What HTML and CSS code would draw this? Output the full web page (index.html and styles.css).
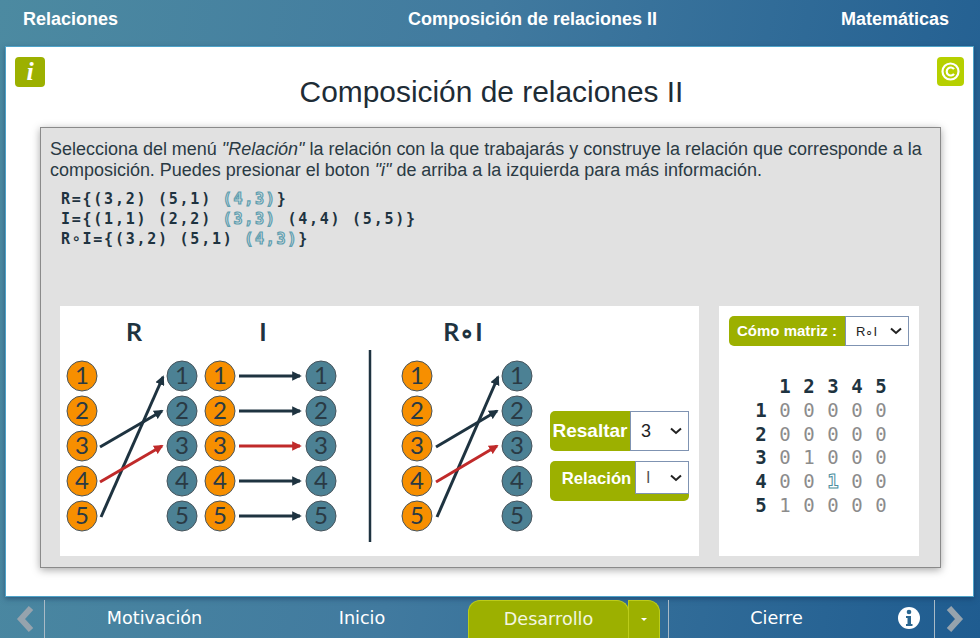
FILE: index.html
```html
<!DOCTYPE html>
<html lang="es">
<head>
    <meta charset="UTF-8">
    <meta name="viewport" content="width=device-width, initial-scale=1.0">
    <title>Composición de relaciones II</title>
    <link rel="stylesheet" href="styles.css">
</head>
<body>
    <header class="top-bar">
        <span class="top-left">Relaciones</span>
        <span>Composición de relaciones II</span>
        <span class="top-right">Matemáticas</span>
    </header>

    <main class="sheet">
        <div class="title-row">
            <button class="icon-btn info-btn">i</button>
            <h1>Composición de relaciones II</h1>
            <button class="icon-btn copy-btn">
                <svg width="21" height="21" viewBox="0 0 21 21">
                    <circle cx="10.5" cy="10.5" r="8" fill="none" stroke="#fff" stroke-width="2.2"/>
                    <path d="M14 8.2a4 4 0 1 0 0 4.6" fill="none" stroke="#fff" stroke-width="2.2"/>
                </svg>
            </button>
        </div>

        <section class="panel">
            <p class="intro">Selecciona del menú <em>"Relación"</em> la relación con la que trabajarás y construye la relación que corresponde a la composición. Puedes presionar el boton <em>"i"</em> de arriba a la izquierda para más información.</p>
            <div class="sets">
                <div>R={(3,2) (5,1) <span class="hl">(4,3)</span>}</div>
                <div>I={(1,1) (2,2) <span class="hl">(3,3)</span> (4,4) (5,5)}</div>
                <div>R∘I={(3,2) (5,1) <span class="hl">(4,3)</span>}</div>
            </div>

            <div class="work">
                <div class="diagram">
                    <svg class="graph" width="490" height="250" viewBox="0 0 490 250">
                        <defs>
                            <marker id="headDark" markerWidth="3.2" markerHeight="3.2" refX="2.6" refY="1.6" orient="auto"><path d="M0 0L3.200 1.600L0 3.200Z" fill="#1e3340"/></marker>
                            <marker id="headRed" markerWidth="3.2" markerHeight="3.2" refX="2.6" refY="1.6" orient="auto"><path d="M0 0L3.200 1.600L0 3.200Z" fill="#c02a2a"/></marker>
                        </defs>
                        <g class="heads">
                            <text x="74" y="35">R</text>
                            <text x="203" y="35">I</text>
                            <text x="403" y="35">R∘I</text>
                        </g>
                        <line class="sep" x1="310" y1="44" x2="310" y2="236"/>

                        <g class="arrow">
                            <line x1="40" y1="141" x2="102" y2="105"/>
                            <line x1="41" y1="211" x2="103" y2="71"/>
                            <line class="red" x1="40" y1="176" x2="102" y2="140"/>
                            <line x1="179" y1="70" x2="240" y2="70"/>
                            <line x1="179" y1="105" x2="240" y2="105"/>
                            <line class="red" x1="179" y1="140" x2="240" y2="140"/>
                            <line x1="179" y1="175" x2="240" y2="175"/>
                            <line x1="179" y1="210" x2="240" y2="210"/>
                            <line x1="376" y1="141" x2="437" y2="105"/>
                            <line x1="377" y1="211" x2="438" y2="71"/>
                            <line class="red" x1="376" y1="176" x2="437" y2="140"/>
                        </g>

                        <g class="node dom">
                            <circle cx="22" cy="70" r="15"/><text x="22" y="78">1</text>
                            <circle cx="22" cy="105" r="15"/><text x="22" y="113">2</text>
                            <circle cx="22" cy="140" r="15"/><text x="22" y="148">3</text>
                            <circle cx="22" cy="175" r="15"/><text x="22" y="183">4</text>
                            <circle cx="22" cy="210" r="15"/><text x="22" y="218">5</text>
                            <circle cx="160" cy="70" r="15"/><text x="160" y="78">1</text>
                            <circle cx="160" cy="105" r="15"/><text x="160" y="113">2</text>
                            <circle cx="160" cy="140" r="15"/><text x="160" y="148">3</text>
                            <circle cx="160" cy="175" r="15"/><text x="160" y="183">4</text>
                            <circle cx="160" cy="210" r="15"/><text x="160" y="218">5</text>
                            <circle cx="357" cy="70" r="15"/><text x="357" y="78">1</text>
                            <circle cx="357" cy="105" r="15"/><text x="357" y="113">2</text>
                            <circle cx="357" cy="140" r="15"/><text x="357" y="148">3</text>
                            <circle cx="357" cy="175" r="15"/><text x="357" y="183">4</text>
                            <circle cx="357" cy="210" r="15"/><text x="357" y="218">5</text>
                        </g>
                        <g class="node cod">
                            <circle cx="122" cy="70" r="15"/><text x="122" y="78">1</text>
                            <circle cx="122" cy="105" r="15"/><text x="122" y="113">2</text>
                            <circle cx="122" cy="140" r="15"/><text x="122" y="148">3</text>
                            <circle cx="122" cy="175" r="15"/><text x="122" y="183">4</text>
                            <circle cx="122" cy="210" r="15"/><text x="122" y="218">5</text>
                            <circle cx="261" cy="70" r="15"/><text x="261" y="78">1</text>
                            <circle cx="261" cy="105" r="15"/><text x="261" y="113">2</text>
                            <circle cx="261" cy="140" r="15"/><text x="261" y="148">3</text>
                            <circle cx="261" cy="175" r="15"/><text x="261" y="183">4</text>
                            <circle cx="261" cy="210" r="15"/><text x="261" y="218">5</text>
                            <circle cx="457" cy="70" r="15"/><text x="457" y="78">1</text>
                            <circle cx="457" cy="105" r="15"/><text x="457" y="113">2</text>
                            <circle cx="457" cy="140" r="15"/><text x="457" y="148">3</text>
                            <circle cx="457" cy="175" r="15"/><text x="457" y="183">4</text>
                            <circle cx="457" cy="210" r="15"/><text x="457" y="218">5</text>
                        </g>
                    </svg>

                    <div class="controls">
                        <label class="ctl ctl-big">
                            <span>Resaltar</span>
                            <select><option>3</option></select>
                        </label>
                        <label class="ctl ctl-rel">
                            <span>Relación</span>
                            <select><option>I</option></select>
                        </label>
                    </div>
                </div>

                <div class="matrix-box">
                    <label class="ctl ctl-matrix">
                        <span>Cómo matriz :</span>
                        <select><option>R∘I</option></select>
                    </label>
                    <div class="matrix">
                        <b></b><b>1</b><b>2</b><b>3</b><b>4</b><b>5</b>
                        <b>1</b><i>0</i><i>0</i><i>0</i><i>0</i><i>0</i>
                        <b>2</b><i>0</i><i>0</i><i>0</i><i>0</i><i>0</i>
                        <b>3</b><i>0</i><i>1</i><i>0</i><i>0</i><i>0</i>
                        <b>4</b><i>0</i><i>0</i><i class="hl">1</i><i>0</i><i>0</i>
                        <b>5</b><i>1</i><i>0</i><i>0</i><i>0</i><i>0</i>
                    </div>
                </div>
            </div>
        </section>
    </main>

    <footer class="bottom-bar">
        <a class="arrow-cell left">
            <svg width="18" height="26" viewBox="0 0 18 26"><path d="M15 2L5 13l10 11" fill="none" stroke="#96a3ad" stroke-width="6"/></svg>
        </a>
        <a class="nav nav-mot">Motivación</a>
        <a class="nav nav-ini">Inicio</a>
        <a class="nav nav-cur">Desarrollo</a>
        <a class="nav-caret"></a>
        <a class="nav nav-cie">Cierre</a>
        <a class="info-cell">
            <svg width="24" height="24" viewBox="0 0 24 24">
                <circle cx="12" cy="12" r="11" fill="#fff"/>
                <circle cx="12" cy="6" r="2.3" fill="#2a6690"/>
                <path d="M9 10h5v8h1.500v2h-6.500v-2h1.500v-6h-1.500z" fill="#2a6690"/>
            </svg>
        </a>
        <a class="arrow-cell right">
            <svg width="18" height="26" viewBox="0 0 18 26"><path d="M3 2l10 11L3 24" fill="none" stroke="#96a3ad" stroke-width="6"/></svg>
        </a>
    </footer>
</body>
</html>
```

FILE: styles.css
```css
* {
    box-sizing: border-box;
}

html, body {
    height: 100%;
}

body {
    margin: 0;
    height: 638px;
    overflow: hidden;
    display: flex;
    flex-direction: column;
    font-family: "Liberation Sans", Arial, sans-serif;
    color: #1e3340;
    background: linear-gradient(100deg, #4c8aa1 0%, #417a9f 45%, #1f5c90 100%);
}

.top-bar {
    height: 46px;
    flex: none;
    display: flex;
    align-items: center;
    padding: 0 31px 7px 23px;
    font-size: 18px;
    font-weight: bold;
    color: #fff;
}

.top-left {
    width: 385px;
}

.top-right {
    margin-left: auto;
}

.sheet {
    height: 551px;
    flex: none;
    margin: 0 6px 0 5px;
    background-color: #fff;
    border: 1px solid #4fa3c9;
    box-shadow: 0 2px 5px rgba(20, 50, 90, 0.5);
    display: flex;
    flex-direction: column;
}

.title-row {
    height: 80px;
    flex: none;
    display: flex;
    justify-content: space-between;
    padding: 10px 9px 0 9px;
    position: relative;
}

h1 {
    margin: 0;
    position: absolute;
    left: 4px;
    right: 0;
    top: 27px;
    text-align: center;
    font-size: 29.900px;
    font-weight: normal;
    line-height: 36px;
    color: #1e2c36;
}

.icon-btn {
    padding: 0;
    border: 0;
    border-radius: 4px;
    display: flex;
    align-items: center;
    justify-content: center;
    color: #fff;
}

.info-btn {
    width: 30px;
    height: 30px;
    background-color: #9cb000;
    font-family: "Liberation Serif", serif;
    font-style: italic;
    font-weight: bold;
    font-size: 26px;
}

.copy-btn {
    width: 27px;
    height: 29px;
    background-color: #b6d000;
}

.panel {
    height: 441px;
    margin: 0 32px 0 34px;
    padding: 11px 9px 11px;
    background-color: #e1e1e1;
    border: 1px solid #8a8a8a;
    box-shadow: 0 2px 8px rgba(0, 0, 0, 0.35);
    display: flex;
    flex-direction: column;
}

.intro {
    margin: 0;
    font-size: 17.980px;
    line-height: 21px;
    color: #2a3a44;
}

.sets {
    margin: 8px 0 0 11px;
    font-family: "DejaVu Sans Mono", monospace;
    font-weight: bold;
    font-size: 15px;
    line-height: 20px;
    letter-spacing: 1.750px;
    white-space: nowrap;
    color: #1e3340;
}

.sets .hl {
    color: #e1e1e1;
    -webkit-text-stroke: 1.200px #5f9fb0;
}

.work {
    margin-top: auto;
    margin-left: 10px;
    display: flex;
    gap: 20px;
}

.diagram {
    width: 639px;
    height: 250px;
    background-color: #fff;
    display: flex;
}

.graph {
    display: block;
    flex: none;
}

.heads text {
    font-family: Lato, sans-serif;
    font-weight: bold;
    font-size: 25px;
    text-anchor: middle;
    fill: #1e3340;
}

.sep {
    stroke: #1e3340;
    stroke-width: 2.500;
}

.arrow line {
    stroke: #1e3340;
    stroke-width: 3;
    marker-end: url(#headDark);
}

.arrow line.red {
    stroke: #c02a2a;
    marker-end: url(#headRed);
}

.node circle {
    stroke: #47545c;
    stroke-width: 1;
}

.node text {
    font-family: Lato, sans-serif;
    font-size: 24px;
    text-anchor: middle;
    fill: #2a3a44;
}

.dom circle {
    fill: #f78f00;
}

.cod circle {
    fill: #4c8194;
}

.controls {
    width: 139px;
    flex: none;
    padding-top: 105px;
    display: flex;
    flex-direction: column;
    gap: 10px;
}

.ctl {
    display: flex;
    align-items: flex-start;
    background-color: #9cb000;
    border-radius: 5px;
    color: #fff;
    font-weight: bold;
}

.ctl span {
    flex: 1;
    text-align: center;
}

.ctl select {
    flex: none;
    appearance: none;
    padding: 0 0 0 10px;
    background: #fff url("data:image/svg+xml,%3Csvg xmlns='http://www.w3.org/2000/svg' width='12' height='8'%3E%3Cpath d='M1 1.500l5 4.500 5-4.500' fill='none' stroke='%23222' stroke-width='2'/%3E%3C/svg%3E") no-repeat right 6px center;
    border: 1px solid #7f93b2;
    border-radius: 0;
    font-family: "Liberation Sans", Arial, sans-serif;
    color: #222;
}

.ctl-big {
    height: 40px;
    font-size: 19px;
    line-height: 40px;
}

.ctl-big select {
    width: 59px;
    height: 40px;
    font-size: 18px;
}

.ctl-rel {
    height: 40px;
    font-size: 16.700px;
    line-height: 35px;
}

.ctl-rel span {
    padding-left: 8px;
}

.ctl-rel select {
    width: 54px;
    height: 33px;
    font-size: 16px;
    color: #555;
}

.matrix-box {
    width: 200px;
    height: 250px;
    background-color: #fff;
    padding: 10px;
}

.ctl-matrix {
    height: 30px;
    font-size: 15px;
    line-height: 30px;
}

.ctl-matrix select {
    width: 64px;
    height: 30px;
    font-size: 13px;
}

.matrix {
    margin: 28px 0 0 20px;
    display: grid;
    grid-template-columns: repeat(6, 24px);
    grid-auto-rows: 23.800px;
    font-family: "DejaVu Sans Mono", monospace;
    font-size: 19px;
    line-height: 24px;
    text-align: center;
}

.matrix b {
    color: #1e3340;
}

.matrix i {
    font-style: normal;
    color: #8c8c8c;
}

.matrix .hl {
    color: #fff;
    font-weight: bold;
    -webkit-text-stroke: 1px #4c8fa0;
}

.bottom-bar {
    flex: 1;
    display: flex;
    align-items: flex-end;
    color: #fff;
    font-family: "DejaVu Sans", sans-serif;
    font-size: 17.600px;
}

.bottom-bar a {
    display: flex;
    align-items: center;
    justify-content: center;
    height: 38px;
    flex: none;
}

.bottom-bar .nav,
.bottom-bar .info-cell {
    padding-bottom: 2px;
}

.arrow-cell {
    width: 45px;
}

.arrow-cell.left {
    border-right: 1px solid #a9bac6;
    padding-left: 5px;
}

.arrow-cell.right {
    width: 46px;
    border-left: 1px solid #a9bac6;
    padding-right: 6px;
}

.nav-mot {
    width: 219px;
}

.nav-ini {
    width: 196px;
    margin-right: 8px;
}

.nav-cur {
    width: 161px;
    background-color: #9cb000;
    border: 1px solid #bccc1a;
    border-bottom: 0;
    border-radius: 12px 12px 0 0;
    color: #f3f6e0;
}

.nav-caret {
    width: 32px;
    margin-left: -1px;
    margin-right: 8px;
    background-color: #9cb000;
    border: 1px solid #bccc1a;
    border-bottom: 0;
    border-radius: 0 12px 0 0;
}

.nav-caret::after {
    content: "";
    border-left: 3px solid transparent;
    border-right: 3px solid transparent;
    border-top: 3px solid #fff;
}

.nav-cie {
    width: 216px;
    border-left: 1px solid #a9bac6;
}

.info-cell {
    width: 50px;
}
```
